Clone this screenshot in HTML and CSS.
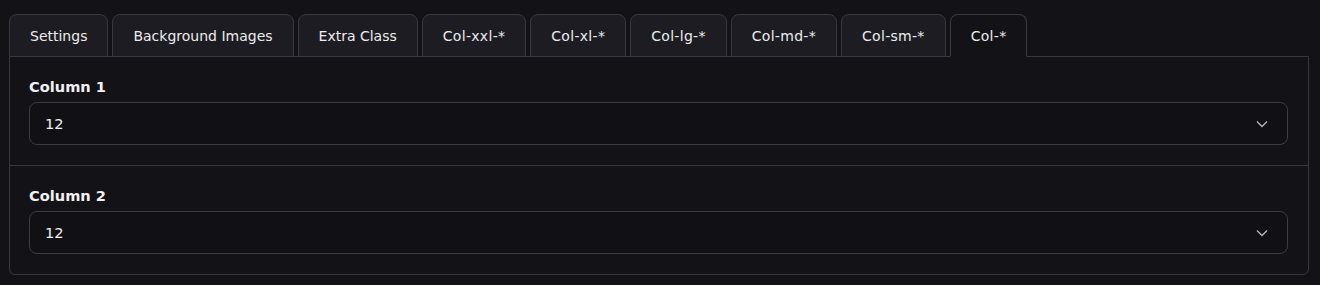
FILE: index.html
```html
<!DOCTYPE html>
<html>
<head>
<meta charset="utf-8">
<link rel="stylesheet" href="styles.css">
</head>
<body>
<div class="wrap">
  <div class="tabs">
    <div class="tab">Settings</div>
    <div class="tab">Background Images</div>
    <div class="tab">Extra Class</div>
    <div class="tab col">Col-xxl-*</div>
    <div class="tab col">Col-xl-*</div>
    <div class="tab col">Col-lg-*</div>
    <div class="tab col">Col-md-*</div>
    <div class="tab col">Col-sm-*</div>
    <div class="tab col active">Col-*</div>
  </div>
  <div class="panel">
    <div class="field">
      <div class="label">Column 1</div>
      <div class="select"><span>12</span>
        <svg class="chev" width="12" height="8" viewBox="0 0 12 8"><path d="M1 1.5 L6 6.5 L11 1.5" fill="none" stroke="#b8b7bd" stroke-width="1.3"/></svg>
      </div>
    </div>
    <div class="field">
      <div class="label">Column 2</div>
      <div class="select"><span>12</span>
        <svg class="chev" width="12" height="8" viewBox="0 0 12 8"><path d="M1 1.5 L6 6.5 L11 1.5" fill="none" stroke="#b8b7bd" stroke-width="1.3"/></svg>
      </div>
    </div>
  </div>
</div>
</body>
</html>
```

FILE: styles.css
```css
html, body {
  margin: 0;
  background: #131217;
}
body {
  font-family: "DejaVu Sans", Verdana, sans-serif;
  color: #f1f1f3;
}
.wrap {
  padding: 14px 11px 0 9px;
}
.tabs {
  display: flex;
  gap: 4px;
  position: relative;
  z-index: 1;
  margin-bottom: -1px;
}
.tab {
  box-sizing: border-box;
  height: 43px;
  padding: 0 20px;
  display: flex;
  align-items: center;
  font-size: 14px;
  background: #1d1c22;
  border: 1px solid #3a3940;
  border-radius: 8px 8px 0 0;
  color: #ececee;
}
.tab.col {
  letter-spacing: 0.3px;
}
.tab.active {
  background: #131217;
  border-bottom-color: #131217;
}
.panel {
  border: 1px solid #3a3940;
  border-radius: 0 0 6px 6px;
}
.field {
  padding: 20px 20px 20px 19px;
}
.field + .field {
  border-top: 1px solid #3a3940;
}
.label {
  font-size: 14.6px;
  font-weight: bold;
  line-height: 20px;
  margin-bottom: 5px;
}
.select {
  box-sizing: border-box;
  height: 43px;
  border: 1px solid #3e3d44;
  border-radius: 8px;
  background: #111015;
  display: flex;
  align-items: center;
  justify-content: space-between;
  padding: 0 19px 0 15px;
  font-size: 14.6px;
}
.chev {
  display: block;
}
```
